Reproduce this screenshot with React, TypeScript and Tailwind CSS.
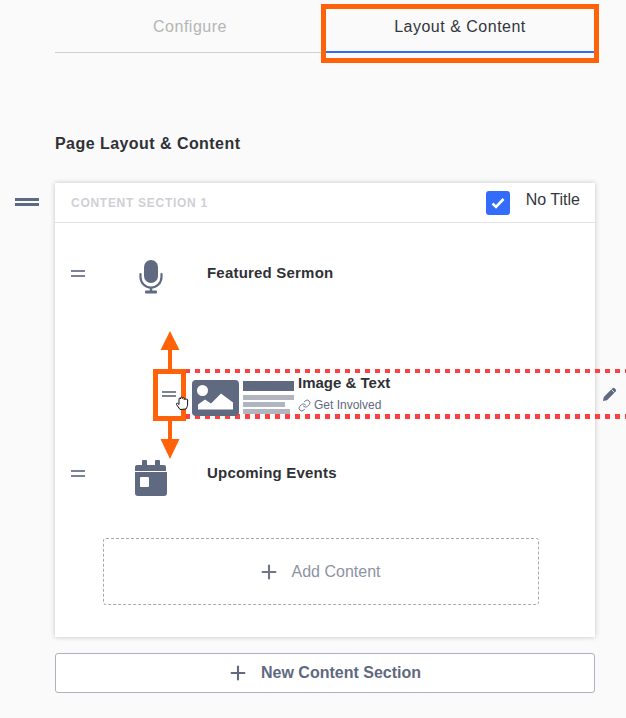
import { Link, Plus } from 'lucide-react';

const ink = '#5f6980';

const DragHandle = ({ className }: { className: string }) => (
  <div className={`flex flex-col justify-between ${className}`}>
    <div className="h-[2px] bg-[#7b8296]" />
    <div className="h-[2px] bg-[#7b8296]" />
  </div>
);

const MicIcon = () => (
  <svg width="24" height="34" viewBox="0 0 24 34" fill="none">
    <rect x="5" y="0" width="14" height="23" rx="7" fill={ink} />
    <path d="M1.5 14v3a10.500 10.500 0 0 0 21 0v-3" stroke={ink} strokeWidth="2.200" strokeLinecap="round" />
    <path d="M12 27v5" stroke={ink} strokeWidth="2.500" />
    <rect x="6" y="30.500" width="12" height="3" rx="1" fill={ink} />
  </svg>
);

const CalendarIcon = () => (
  <svg width="32" height="36" viewBox="0 0 32 36">
    <path d="M8 0h3a1 1 0 0 1 1 1v4h8V1a1 1 0 0 1 1-1h3a1 1 0 0 1 1 1v4h4a2 2 0 0 1 2 2v4H0V7a2 2 0 0 1 2-2h5V1a1 1 0 0 1 1-1z" fill={ink} />
    <path d="M0 12h32v21a3 3 0 0 1-3 3H3a3 3 0 0 1-3-3z" fill={ink} />
    <rect x="5" y="17" width="9" height="10" rx="1" fill="#fff" />
  </svg>
);

const ImageIcon = () => (
  <svg width="47" height="36" viewBox="0 0 47 36">
    <rect width="47" height="36" rx="4" fill={ink} />
    <circle cx="10.500" cy="10.500" r="5.500" fill="#fff" />
    <path d="M6 29.500v-5l7-5 6 4 10-10 12 9v7z" fill="#fff" />
  </svg>
);

const PencilIcon = () => (
  <svg width="14" height="14" viewBox="0 0 14 14">
    <path d="M0 14l.8-4L9.500 1.300a1.500 1.500 0 0 1 2.100 0l1.100 1.100a1.500 1.500 0 0 1 0 2.100L4 13.200z" fill={ink} />
    <path d="M8.500 2.500l3 3" stroke="#fff" strokeWidth="0.800" />
  </svg>
);

const CheckBox = () => (
  <div className="flex h-6 w-6 items-center justify-center rounded-[3px] bg-[#336cfb]">
    <svg width="14" height="12" viewBox="0 0 14 12" fill="none">
      <path d="M1.500 6.500l3.500 3.500 7.500-8" stroke="#fff" strokeWidth="2.600" />
    </svg>
  </div>
);

// grab cursor drawn over the dragged row
const HandCursor = () => (
  <svg width="16" height="16" viewBox="0 0 16 16" className="absolute left-[175px] top-[395px]">
    <path
      d="M5 14.500L1.500 9.500c-.5-1 .5-1.800 1.400-1L4 9.500V4c0-1.200 1.500-1.200 1.600 0V3c0-1.200 1.700-1.200 1.800 0v.5c0-1.200 1.700-1.200 1.800 0v1c.1-1 1.600-1 1.700 0 .3-.8 1.700-.6 1.700.5v4c0 2-.7 3.500-1.600 5z"
      fill="#fff"
      stroke="#111"
      strokeWidth="1"
    />
  </svg>
);

function SectionRow({ icon, title }: { icon: React.ReactNode; title: string }) {
  return (
    <div className="flex h-[100px] items-start">
      <DragHandle className="ml-4 mt-[47px] h-[7px] w-[14px]" />
      <div className="flex w-[122px] justify-center pl-[10px] pt-[37px]">{icon}</div>
      <div className="pt-10 text-[15px] leading-5 font-bold tracking-[0.2px] text-[#2f3136]">{title}</div>
    </div>
  );
}

export default function App() {
  return (
    <div
      className="relative h-[718px] w-[626px] overflow-hidden bg-[#fafafa] pt-[3px]"
      style={{ fontFamily: '"Liberation Sans", Arial, sans-serif' }}
    >
      <div className="ml-[55px] flex h-[50px] w-[540px] border-b border-[#cfcfcf]">
        <div className="flex w-[270px] justify-center pt-[14px] text-base leading-5 tracking-[0.5px] text-[#b5b5b5]">
          Configure
        </div>
        <div className="-mb-px flex w-[270px] justify-center border-b-2 border-[#336cfb] pt-[14px] text-base leading-5 tracking-[0.5px] text-[#33363d]">
          Layout &amp; Content
        </div>
      </div>

      <h2 className="ml-[55px] mt-[81px] text-base leading-5 font-bold tracking-[0.45px] text-[#2f3136]">
        Page Layout &amp; Content
      </h2>

      <div className="relative ml-[55px] mt-[29px] w-[540px] bg-white shadow-[0_0_5px_rgba(0,0,0,0.22)]">
        <DragHandle className="absolute -left-10 top-[15px] h-2 w-6 [&>div]:h-[3px] [&>div]:bg-[#5f6980]" />
        <div className="flex h-10 items-center justify-between border-b border-[#e3e3ea] pl-4 pr-[15px]">
          <span className="text-xs font-bold tracking-[0.72px] text-[#cfcfd4]">CONTENT SECTION 1</span>
          <div className="flex items-start gap-4">
            <CheckBox />
            <span className="-mt-px text-base leading-5 text-[#33363d]">No Title</span>
          </div>
        </div>

        <SectionRow icon={<MicIcon />} title="Featured Sermon" />

        <div className="relative h-[100px]">
          <div className="absolute -right-[31px] left-[130px] top-[46px] flex h-[50px] items-start pl-[7px] pr-[9px] pt-[11px]">
            <div className="absolute inset-x-0 top-0 h-1 bg-[repeating-linear-gradient(90deg,#ff4040_0_5px,transparent_5px_10px)]" />
            <div className="absolute inset-x-0 bottom-0 h-[5px] bg-[repeating-linear-gradient(90deg,#ff4040_0_5px,transparent_5px_10px)]" />
            <div className="relative flex items-start">
              <ImageIcon />
              <div className="ml-1 mt-px flex w-[51px] flex-col gap-[2px]">
                <div className="h-[10px] bg-[#5f6980]" />
                <div className="mt-[2px] h-[5px] w-full bg-[#b1b5bf]" />
                <div className="h-[5px] w-[42px] bg-[#b1b5bf]" />
                <div className="h-[5px] w-[47px] bg-[#b1b5bf]" />
              </div>
              <div className="-mt-[7px] ml-1">
                <div className="text-[15px] leading-5 font-bold text-[#2f3136]">Image &amp; Text</div>
                <div className="mt-1 flex items-center gap-[3px] text-xs leading-4 text-[#5f6980]">
                  <Link size={13} strokeWidth={1.700} />
                  Get Involved
                </div>
              </div>
            </div>
            <div className="relative ml-auto mt-[7px]">
              <PencilIcon />
            </div>
          </div>
          <DragHandle className="absolute left-[107px] top-[68px] h-[6px] w-[14px]" />
        </div>

        <SectionRow icon={<CalendarIcon />} title="Upcoming Events" />

        <div className="pb-8 pl-12 pr-14 pt-[15px]">
          <div className="flex h-[67px] items-center justify-center rounded-[3px] border border-dashed border-[#a9a9a9] pr-1 text-base text-[#8e93a3]">
            <Plus size={22} strokeWidth={2.300} className="mr-3 text-[#6f768a]" />
            Add Content
          </div>
        </div>
      </div>

      <button className="ml-[55px] mt-4 flex h-10 w-[540px] items-center justify-center rounded-[3px] border border-[#aeb2bd] bg-white pr-[2px] text-base font-bold text-[#5f6980]">
        <Plus size={22} strokeWidth={2.300} className="mr-3" />
        New Content Section
      </button>

      {/* orange callouts on top of the screenshot */}
      <div className="absolute left-[321px] top-1 h-[59px] w-[278px] border-[5px] border-[#ff6209]" />
      <div className="absolute left-[153px] top-[369px] h-[52px] w-[33px] border-[5px] border-[#ff6209]" />
      <svg width="20" height="40" viewBox="0 0 20 40" className="absolute left-[160px] top-[330px]">
        <path d="M10 1l9.500 19H12v20H8V20H.5z" fill="#ff6209" />
      </svg>
      <svg width="20" height="40" viewBox="0 0 20 40" className="absolute left-[160px] top-[420px]">
        <path d="M8 1h4v18h7.500L10 39 .5 19H8z" fill="#ff6209" />
      </svg>
      <HandCursor />
    </div>
  );
}
